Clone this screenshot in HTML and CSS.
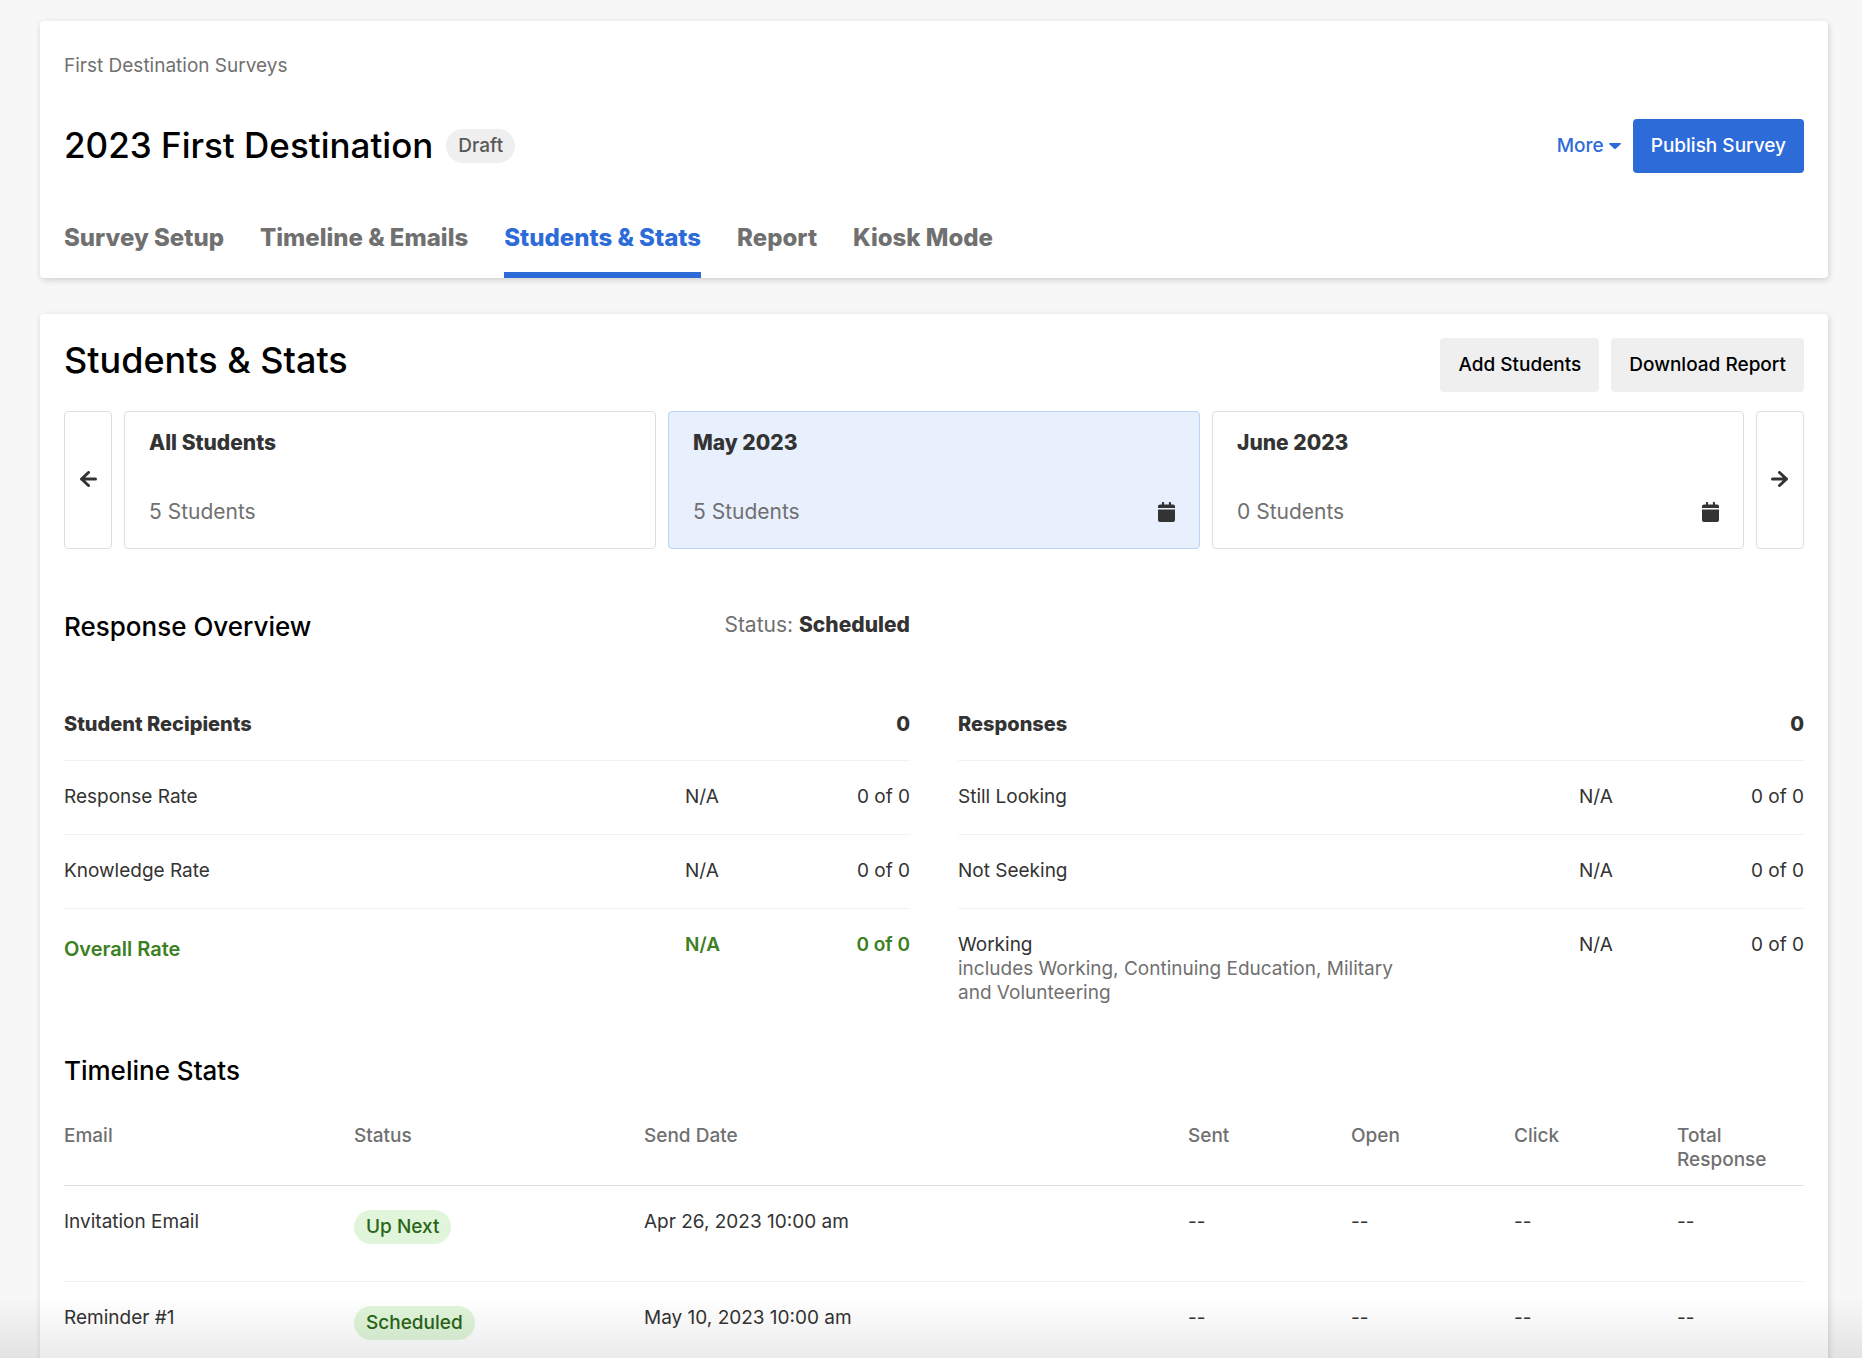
FILE: index.html
```html
<!DOCTYPE html>
<html lang="en">
<head>
    <meta charset="UTF-8">
    <meta name="viewport" content="width=device-width, initial-scale=1.0">
    <title>2023 First Destination</title>
    <link rel="stylesheet" href="styles.css">
</head>
<body>
    <header class="card survey-header">
        <a class="breadcrumb" href="#">First Destination Surveys</a>
        <div class="title-row">
            <h1>2023 First Destination</h1>
            <span class="badge">Draft</span>
            <div class="actions">
                <button class="more">More
                    <svg width="12" height="6" viewBox="0 0 12 6"><path d="M0.8 0h10.4c.7 0 1 .8.5 1.200L6.700 5.700a1 1 0 0 1-1.400 0L.3 1.200C-.2.8.1 0 .8 0z" fill="currentColor"/></svg>
                </button>
                <button class="btn primary">Publish Survey</button>
            </div>
        </div>
        <nav class="tabs">
            <a href="#">Survey Setup</a>
            <a href="#">Timeline &amp; Emails</a>
            <a href="#" class="active">Students &amp; Stats</a>
            <a href="#">Report</a>
            <a href="#">Kiosk Mode</a>
        </nav>
    </header>

    <main class="card stats">
        <div class="stats-header">
            <h2>Students &amp; Stats</h2>
            <div class="actions">
                <button class="btn">Add Students</button>
                <button class="btn">Download Report</button>
            </div>
        </div>

        <!-- Cohort picker -->
        <div class="cohorts">
            <button class="arrow" aria-label="Previous">
                <svg width="18" height="16" viewBox="0 0 18 16"><path d="M9.500 1.500L2.500 8l7 6.500M2.500 8H16.500" fill="none" stroke="currentColor" stroke-width="3" stroke-linecap="round" stroke-linejoin="round"/></svg>
            </button>
            <button class="cohort">
                <span class="cohort-name">All Students</span>
                <span class="cohort-count">5 Students</span>
            </button>
            <button class="cohort selected">
                <span class="cohort-name">May 2023</span>
                <span class="cohort-count">5 Students
                    <svg width="17" height="20" viewBox="0 0 17 20"><path d="M0 4.500C0 3.300.8 2.500 2 2.500h2V.6c0-.4.2-.6.6-.6h.9c.4 0 .6.2.6.6v1.900h4.800V.6c0-.4.2-.6.6-.6h.9c.4 0 .6.2.6.6v1.900h2c1.200 0 2 .8 2 2V6H0zM0 7.500h17v10.500c0 1.200-.8 2-2 2H2c-1.200 0-2-.8-2-2z" fill="currentColor"/></svg>
                </span>
            </button>
            <button class="cohort">
                <span class="cohort-name">June 2023</span>
                <span class="cohort-count">0 Students
                    <svg width="17" height="20" viewBox="0 0 17 20"><path d="M0 4.500C0 3.300.8 2.500 2 2.500h2V.6c0-.4.2-.6.6-.6h.9c.4 0 .6.2.6.6v1.900h4.800V.6c0-.4.2-.6.6-.6h.9c.4 0 .6.2.6.6v1.900h2c1.200 0 2 .8 2 2V6H0zM0 7.500h17v10.500c0 1.200-.8 2-2 2H2c-1.200 0-2-.8-2-2z" fill="currentColor"/></svg>
                </span>
            </button>
            <button class="arrow" aria-label="Next">
                <svg width="18" height="16" viewBox="0 0 18 16"><path d="M8.500 1.500L15.500 8l-7 6.500M15.500 8H1.500" fill="none" stroke="currentColor" stroke-width="3" stroke-linecap="round" stroke-linejoin="round"/></svg>
            </button>
        </div>

        <section class="overview">
            <div class="overview-header">
                <h3>Response Overview</h3>
                <p class="status">Status: <strong>Scheduled</strong></p>
            </div>
            <table class="rates">
                <tr><th>Student Recipients</th><th></th><th>0</th></tr>
                <tr><td>Response Rate</td><td>N/A</td><td>0 of 0</td></tr>
                <tr><td>Knowledge Rate</td><td>N/A</td><td>0 of 0</td></tr>
                <tr class="overall"><td>Overall Rate</td><td>N/A</td><td>0 of 0</td></tr>
            </table>
            <table class="rates">
                <tr><th>Responses</th><th></th><th>0</th></tr>
                <tr><td>Still Looking</td><td>N/A</td><td>0 of 0</td></tr>
                <tr><td>Not Seeking</td><td>N/A</td><td>0 of 0</td></tr>
                <tr>
                    <td>Working
                        <div class="note">includes Working, Continuing Education, Military and Volunteering</div>
                    </td>
                    <td>N/A</td>
                    <td>0 of 0</td>
                </tr>
            </table>
        </section>

        <h3>Timeline Stats</h3>
        <table class="timeline">
            <thead>
                <tr>
                    <th class="col-email">Email</th>
                    <th class="col-status">Status</th>
                    <th class="col-date">Send Date</th>
                    <th class="col-num">Sent</th>
                    <th class="col-num">Open</th>
                    <th class="col-num">Click</th>
                    <th class="col-total">Total Response</th>
                </tr>
            </thead>
            <tbody>
                <tr>
                    <td>Invitation Email</td>
                    <td><span class="badge green">Up Next</span></td>
                    <td>Apr 26, 2023 10:00 am</td>
                    <td>--</td>
                    <td>--</td>
                    <td>--</td>
                    <td>--</td>
                </tr>
                <tr>
                    <td>Reminder #1</td>
                    <td><span class="badge green">Scheduled</span></td>
                    <td>May 10, 2023 10:00 am</td>
                    <td>--</td>
                    <td>--</td>
                    <td>--</td>
                    <td>--</td>
                </tr>
            </tbody>
        </table>
    </main>

    <div class="bottom-shade"></div>
</body>
</html>
```

FILE: styles.css
```css
* {
    margin: 0;
    padding: 0;
    box-sizing: border-box;
}

body {
    background: #f7f7f7;
    padding: 21px 34px 0 40px;
    font-family: Inter, "Liberation Sans", sans-serif;
    font-size: 19px;
    line-height: 24px;
    color: #333;
}

a {
    color: inherit;
    text-decoration: none;
}

button {
    font: inherit;
    color: inherit;
    border: none;
    background: none;
    cursor: pointer;
}

h1, h2 {
    font-size: 36px;
    line-height: 44px;
    font-weight: 500;
    color: #000;
}

h1 {
    font-size: 35px;
    padding-bottom: 3px;
}

h3 {
    font-size: 26px;
    line-height: 32px;
    font-weight: 500;
    color: #000;
}

.card {
    background: #fff;
    border-radius: 4px;
    padding: 0 24px;
    box-shadow: 1px 2px 6px rgba(0, 0, 0, 0.16);
}

/* Header */
.survey-header {
    padding-top: 33px;
    margin-bottom: 36px;
}

.breadcrumb {
    display: inline-block;
    color: #707070;
}

.title-row {
    display: flex;
    align-items: center;
    margin-top: 41px;
}

.badge {
    display: inline-block;
    padding: 5px 12px;
    border-radius: 17px;
    background: #efefef;
    color: #595959;
    font-weight: 500;
}

h1 + .badge {
    margin-left: 13px;
}

.badge.green {
    background: #e0f5da;
    color: #2a6518;
}

.actions {
    display: flex;
    gap: 12px;
    margin-left: auto;
}

.btn {
    height: 54px;
    padding: 0 18px;
    border-radius: 4px;
    background: #efefef;
    color: #000;
    font-weight: 500;
}

.btn.primary {
    background: #2d6bd9;
    color: #fff;
}

.more {
    display: flex;
    align-items: center;
    gap: 5px;
    color: #2d6bd9;
    font-weight: 500;
}

.tabs {
    display: flex;
    gap: 36px;
    margin-top: 45px;
}

.tabs a {
    height: 60px;
    padding-top: 8px;
    font-size: 24px;
    font-weight: 800;
    color: #707070;
}

.tabs .active {
    color: #2d6bd9;
    border-bottom: 6px solid #2d6bd9;
}

/* Stats */
.stats {
    padding-top: 24px;
    padding-bottom: 24px;
}

.stats-header {
    display: flex;
}

.cohorts {
    display: flex;
    gap: 12px;
    margin: 19px 0 62px;
}

.arrow,
.cohort {
    height: 138px;
    border: 1px solid #dedede;
    border-radius: 4px;
}

.arrow {
    width: 48px;
    padding-bottom: 3px;
    display: flex;
    align-items: center;
    justify-content: center;
}

.cohort {
    flex: 1;
    padding: 19px 24px 24px;
    display: flex;
    flex-direction: column;
    justify-content: space-between;
    text-align: left;
    font-size: 21px;
}

.cohort.selected {
    background: #e8effd;
    border-color: #b9d2f5;
}

.cohort-name {
    font-weight: 800;
}

.cohort-count {
    display: flex;
    align-items: center;
    justify-content: space-between;
    color: #707070;
}

.cohort-count svg {
    color: #333;
}

/* Response overview */
.overview {
    display: grid;
    grid-template-columns: 1fr 1fr;
    column-gap: 48px;
    margin-bottom: 26px;
}

.overview-header {
    display: flex;
    justify-content: space-between;
    margin-bottom: 45px;
}

.status {
    font-size: 21px;
    line-height: 28px;
    color: #707070;
}

.status strong {
    color: #333;
    font-weight: 800;
}

table {
    width: 100%;
    border-collapse: collapse;
    table-layout: fixed;
}

th,
td {
    text-align: left;
    vertical-align: top;
}

.rates {
    grid-row: 2;
    align-self: start;
}

.rates th,
.rates td {
    padding: 24px 0;
    height: 74px;
}

.rates th {
    height: 72px;
    font-size: 20px;
    font-weight: 800;
}

.rates tr + tr {
    border-top: 1px solid #f2f2f2;
}

.rates th:nth-child(2) {
    width: 115px;
}

.rates th:last-child {
    width: 110px;
}

.rates th:last-child,
.rates td:last-child {
    text-align: right;
}

.note {
    max-width: 450px;
    color: #707070;
}

.rates .overall td {
    color: #3b8022;
    font-weight: 600;
}

.rates .overall td:first-child {
    font-size: 20px;
    padding-top: 28px;
}

/* Timeline */
.timeline {
    margin-top: 37px;
}

.timeline th {
    padding-bottom: 13px;
    font-weight: 500;
    color: #707070;
}

.timeline tr {
    border-bottom: 1px solid #f2f2f2;
}

.timeline thead tr {
    border-color: #dedede;
}

.timeline td {
    height: 96px;
    padding-top: 24px;
}

.col-email,
.col-status {
    width: 290px;
}

.col-num {
    width: 163px;
}

.col-total {
    width: 127px;
}

.bottom-shade {
    position: fixed;
    left: 0;
    right: 0;
    bottom: 0;
    height: 60px;
    background: linear-gradient(rgba(0, 0, 0, 0), rgba(0, 0, 0, 0.08));
    pointer-events: none;
}
```
